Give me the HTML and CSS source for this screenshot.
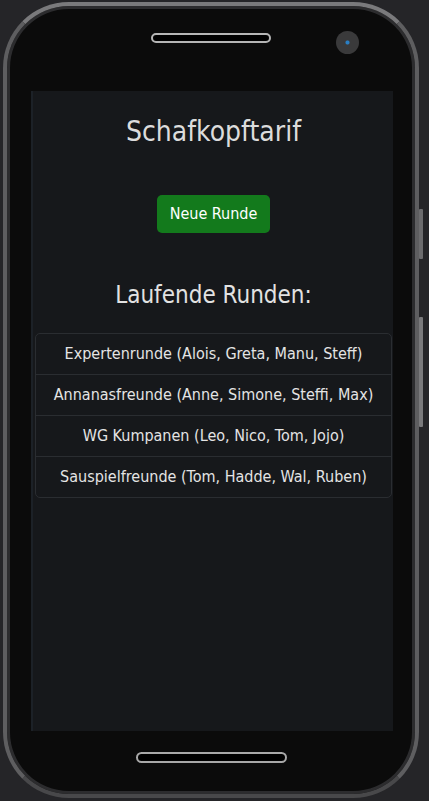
FILE: index.html
```html
<!DOCTYPE html>
<html lang="de">
<head>
<meta charset="utf-8">
<title>Schafkopftarif</title>
<link rel="stylesheet" href="styles.css">
</head>
<body>
<div class="phone">
  <span class="side-btn side-btn-top"></span>
  <span class="side-btn side-btn-bottom"></span>
  <div class="phone-top">
    <div class="speaker"></div>
    <div class="camera"></div>
  </div>
  <main class="screen">
    <h1 class="title">Schafkopftarif</h1>
    <button class="btn-new" type="button">Neue Runde</button>
    <h2 class="subtitle">Laufende Runden:</h2>
    <ul class="rounds">
      <li class="round">Expertenrunde (Alois, Greta, Manu, Steff)</li>
      <li class="round">Annanasfreunde (Anne, Simone, Steffi, Max)</li>
      <li class="round">WG Kumpanen (Leo, Nico, Tom, Jojo)</li>
      <li class="round">Sauspielfreunde (Tom, Hadde, Wal, Ruben)</li>
    </ul>
  </main>
  <div class="phone-bottom">
    <div class="home-bar"></div>
  </div>
</div>
</body>
</html>
```
FILE: styles.css
```css
* { box-sizing: border-box; }
html, body { margin: 0; padding: 0; }
body {
  background: #252528;
  width: 429px;
  height: 801px;
  overflow: hidden;
  padding: 2px 0 0 3px;
  font-family: "DejaVu Sans Condensed", "DejaVu Sans", sans-serif;
}
.phone {
  position: relative;
  width: 416px;
  height: 796px;
  border: 4px solid #5e5e60;
  border-top-color: #7a7a7c;
  border-bottom-color: #48484a;
  border-radius: 66px;
  background: #0b0b0b;
  box-shadow: inset 0 0 0 3px #2c2c2e;
  display: flex;
  flex-direction: column;
}
.side-btn {
  position: absolute;
  right: -8px;
  width: 4px;
  background: #6c6c6e;
  border-radius: 1px;
}
.side-btn-top { top: 203px; height: 50px; }
.side-btn-bottom { top: 311px; height: 110px; background: #7a7a7c; }
.phone-top {
  position: relative;
  height: 85px;
  flex: none;
  display: flex;
  justify-content: center;
}
.speaker {
  margin-top: 27px;
  width: 120px;
  height: 10px;
  border: 2px solid #b5b5b5;
  border-radius: 6px;
  background: #000;
}
.camera {
  position: absolute;
  left: 329px;
  top: 25px;
  width: 23px;
  height: 23px;
  border-radius: 50%;
  background: radial-gradient(circle at center, #2a7fc4 0 1.5px, #3a3a3b 2.5px);
}
.screen {
  flex: none;
  margin: 0 22px 0 24px;
  height: 640px;
  background: #16181b;
  border-left: 2px solid #1c2127;
  padding: 24px 1px 0 2px;
  display: flex;
  flex-direction: column;
  align-items: center;
  color: #dee2e6;
}
.title {
  margin: 0;
  font-size: 28px;
  font-weight: 500;
  line-height: 1.2;
  color: #dcdcdc;
}
.btn-new {
  margin-top: 46px;
  height: 38px;
  padding: 6px 13px;
  border: 0;
  border-radius: 5px;
  background: #137a1c;
  color: #fff;
  font-family: inherit;
  font-size: 16px;
  line-height: 24px;
}
.subtitle {
  margin: 48px 0 0;
  font-size: 24px;
  font-weight: 500;
  line-height: 1.2;
  color: #e2e2e2;
}
.rounds {
  list-style: none;
  margin: 24px 0 0;
  padding: 0;
  align-self: stretch;
  border: 1px solid #2a2d31;
  border-radius: 5px;
}
.round {
  padding: 8px 16px;
  font-size: 16px;
  line-height: 24px;
  text-align: center;
  color: #e4e4e4;
  border-top: 1px solid #2a2d31;
}
.round:first-child { border-top: 0; }
.phone-bottom {
  flex: 1;
  display: flex;
  justify-content: center;
}
.home-bar {
  margin-top: 21px;
  width: 151px;
  height: 11px;
  border: 2px solid #a8a8a8;
  border-radius: 6px;
  background: #000;
}
```
